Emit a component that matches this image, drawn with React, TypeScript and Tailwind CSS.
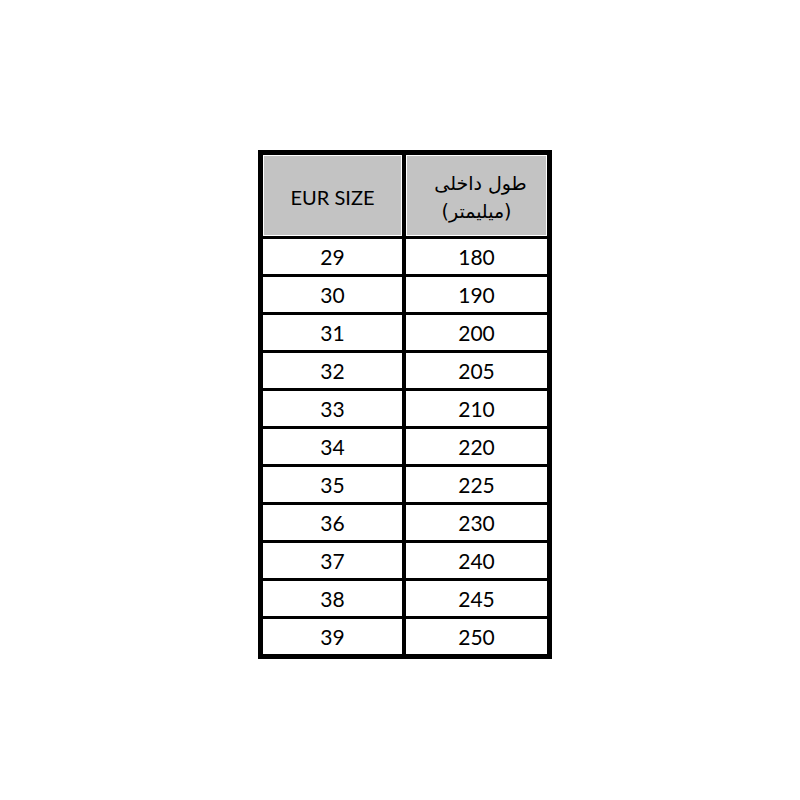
import React from "react";

const rows: [string, string][] = [
  ["29", "180"],
  ["30", "190"],
  ["31", "200"],
  ["32", "205"],
  ["33", "210"],
  ["34", "220"],
  ["35", "225"],
  ["36", "230"],
  ["37", "240"],
  ["38", "245"],
  ["39", "250"],
];

export default function App() {
  return (
    <div
      className="w-[800px] h-[800px] bg-white flex justify-center pt-[150px] text-black"
      style={{ fontFamily: 'Lato, "DejaVu Sans", sans-serif' }}
    >
      <div className="ml-[10px] w-[294px] self-start border-[5px] border-black bg-black flex flex-col gap-[3px]">
        <div className="flex gap-[4px] h-[81px]">
          <div className="w-[139px] bg-white p-px">
            <div className="h-full bg-[#c3c3c3] flex items-center justify-center pt-[3px] text-[20px]">
              EUR SIZE
            </div>
          </div>
          <div className="w-[141px] bg-white p-px">
            <div
              dir="rtl"
              className="h-full bg-[#c3c3c3] flex flex-col items-center justify-center pt-[3px] text-[19px] leading-[28px]"
              style={{ fontFamily: '"DejaVu Sans", sans-serif' }}
            >
              <span className="pl-[8px]">طول داخلی</span>
              <span>(میلیمتر)</span>
            </div>
          </div>
        </div>
        {rows.map(([a, b]) => (
          <div key={a} className="flex gap-[4px] h-[35px]">
            <div className="w-[139px] bg-white flex items-center justify-center text-[21px]">
              {a}
            </div>
            <div className="w-[141px] bg-white flex items-center justify-center text-[21px]">
              {b}
            </div>
          </div>
        ))}
      </div>
    </div>
  );
}
